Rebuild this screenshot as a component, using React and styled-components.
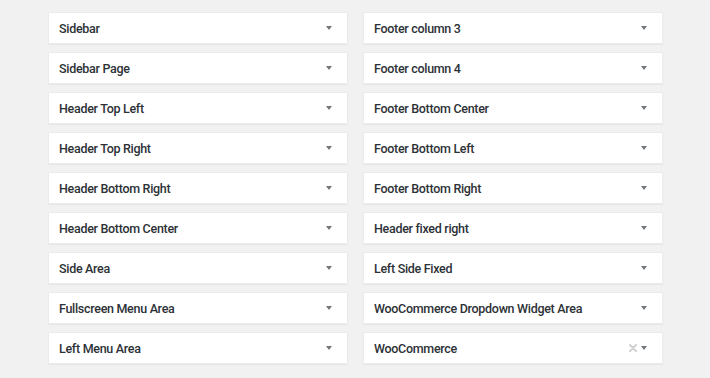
import React from "react";
import styled, { createGlobalStyle } from "styled-components";

const GlobalStyle = createGlobalStyle`
  html, body {
    margin: 0;
    padding: 0;
    background: #f1f1f1;
  }
  body {
    font-family: Roboto, "Open Sans", Arial, sans-serif;
  }
`;

const Page = styled.div`
  width: 710px;
  height: 378px;
  box-sizing: border-box;
  padding: 12px 0 0 48px;
  display: grid;
  grid-template-columns: 300px 300px;
  column-gap: 15px;
  align-content: start;
`;

const Column = styled.div`
  display: flex;
  flex-direction: column;
  gap: 8px;
`;

const Widget = styled.div`
  height: 32px;
  box-sizing: border-box;
  background: #fff;
  border: 1px solid #ebebeb;
  box-shadow: 0 1px 1px rgba(0, 0, 0, 0.04);
  display: flex;
  align-items: center;
  padding: 0 15px 0 10px;
`;

const Title = styled.span`
  flex: 1;
  font-size: 12.5px;
  font-weight: 500;
  color: #2c3136;
  letter-spacing: -0.3px;
  padding-top: 1px;
`;

const Actions = styled.span`
  display: flex;
  align-items: center;
  gap: 4px;
`;

const Arrow = styled.span`
  width: 0;
  height: 0;
  border-left: 3px solid transparent;
  border-right: 3px solid transparent;
  border-top: 4px solid #72777c;
`;

const Remove = styled.svg`
  width: 8px;
  height: 8px;
`;

const left = [
  "Sidebar",
  "Sidebar Page",
  "Header Top Left",
  "Header Top Right",
  "Header Bottom Right",
  "Header Bottom Center",
  "Side Area",
  "Fullscreen Menu Area",
  "Left Menu Area",
];

const right = [
  "Footer column 3",
  "Footer column 4",
  "Footer Bottom Center",
  "Footer Bottom Left",
  "Footer Bottom Right",
  "Header fixed right",
  "Left Side Fixed",
  "WooCommerce Dropdown Widget Area",
  "WooCommerce",
];

const Area = ({ name, removable }) => (
  <Widget>
    <Title>{name}</Title>
    <Actions>
      {removable && (
        <Remove viewBox="0 0 8 8">
          <path
            d="M1 1 L7 7 M7 1 L1 7"
            stroke="#cfcfcf"
            strokeWidth="2"
            strokeLinecap="round"
          />
        </Remove>
      )}
      <Arrow />
    </Actions>
  </Widget>
);

const App = () => (
  <>
    <GlobalStyle />
    <Page>
      <Column>
        {left.map((n) => (
          <Area key={n} name={n} />
        ))}
      </Column>
      <Column>
        {right.map((n) => (
          <Area key={n} name={n} removable={n === "WooCommerce"} />
        ))}
      </Column>
    </Page>
  </>
);

export default App;
